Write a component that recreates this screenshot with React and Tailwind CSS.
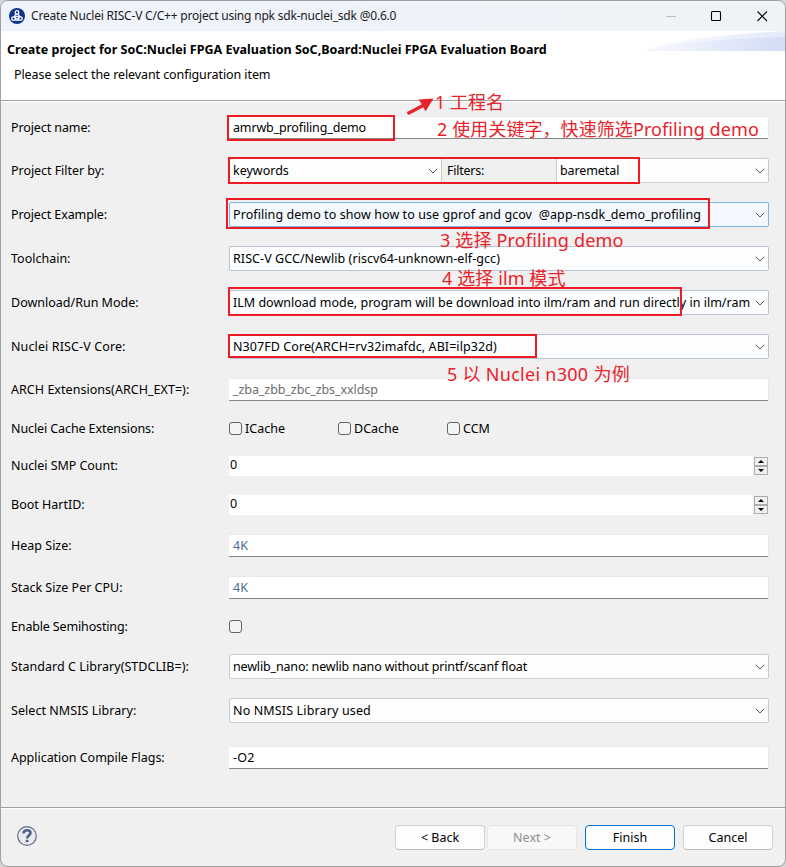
const chev = (
  <svg width="10" height="6" viewBox="0 0 10 6" fill="none" stroke="#5c5c5c" strokeWidth="1" className="shrink-0">
    <path d="M0.8 0.8 L5 5 L9.2 0.8" />
  </svg>
);

const UI = "font-['Noto_Sans','Noto_Sans_CJK_SC',sans-serif]";

function Txt({ className = "", children }) {
  return <span className={`whitespace-pre ${className}`}>{children}</span>;
}

function Row({ label, labelClass = "", className = "", children }) {
  return (
    <div className={`flex items-center ${className}`}>
      <div className={`w-[218px] shrink-0 leading-[13px] ${labelClass}`}>
        <Txt>{label}</Txt>
      </div>
      {children}
    </div>
  );
}

function Combo({ children, textClass = "", className = "w-[540px] border-[#b9c3d1] bg-[#fbfdfe]" }) {
  return (
    <div className={`flex h-[25px] shrink-0 items-center justify-between rounded-[2px] border pr-[3px] pl-[3px] ${className}`}>
      <Txt className={`pt-[2px] ${textClass}`}>{children}</Txt>
      {chev}
    </div>
  );
}

function Field({ children, textClass = "" }) {
  return (
    <div className="flex h-[22px] w-[539px] shrink-0 items-center border-b border-[#868686] bg-white pl-[4px] shadow-[1px_0_0_#e6e6e6,0_-1px_0_#e9e9e9]">
      <Txt className={`pt-[2px] ${textClass}`}>{children}</Txt>
    </div>
  );
}

function Check({ children, className = "" }) {
  return (
    <div className={`flex items-center gap-[3px] ${className}`}>
      <div className="size-[13px] shrink-0 rounded-[3px] border border-[#636363] bg-[#f4f4f4]" />
      <Txt className="pt-[2px]">{children}</Txt>
    </div>
  );
}

function Spinner() {
  return (
    <div className="flex h-[20px] w-[540px] shrink-0 items-center">
      <div className="flex h-full w-[524px] items-center bg-white pb-px pl-px">0</div>
      <div className="ml-[1px] flex h-[18px] w-[14px] flex-col">
        <div className="flex h-[9px] items-center justify-center border border-[#adadad] bg-[#f0f0f0]">
          <svg width="6" height="3" viewBox="0 0 6 3"><path d="M3 0 L6 3 H0Z" /></svg>
        </div>
        <div className="flex h-[9px] items-center justify-center border border-[#adadad] bg-[#f0f0f0]">
          <svg width="6" height="3" viewBox="0 0 6 3"><path d="M0 0 H6 L3 3Z" /></svg>
        </div>
      </div>
    </div>
  );
}

function Button({ children, className = "border-[#d0d0d0] border-b-[#bcbcbc] bg-[#fdfdfd]" }) {
  return (
    <button className={`flex h-[25px] w-[90px] items-center justify-center rounded-[4px] border pt-[2px] ${className}`}>
      <Txt>{children}</Txt>
    </button>
  );
}

function Mark({ className }) {
  return <div className={`absolute border-2 border-[#ed1c24] ${className}`} />;
}

function Note({ className, children }) {
  return (
    <div className={`absolute text-[18px] leading-[24px] whitespace-pre text-[#e8232b] ${className}`}>{children}</div>
  );
}

export default function App() {
  return (
    <div className={`relative h-[867px] w-[786px] bg-[#d3d5d8] text-[12.5px] text-black ${UI}`}>
      <div className="flex h-[867px] w-[786px] flex-col overflow-hidden rounded-[8px] border border-[#a0a0a0] bg-[#f0f0f0]">
        <header className="flex h-[30px] shrink-0 items-center bg-linear-to-r from-[#eff3fb] to-[#eef3f7] pl-[8px]">
          <svg width="16" height="16" viewBox="0 0 16 16">
            <circle cx="8" cy="8" r="8" fill="#12338c" />
            <g fill="none" stroke="#fff" strokeWidth="1.3">
              <circle cx="8" cy="4.4" r="1.8" />
              <circle cx="4.5" cy="10.6" r="1.8" />
              <circle cx="11.5" cy="10.6" r="1.8" />
              <circle cx="8" cy="9.6" r="1.5" />
              <path d="M7 6L5 9M9 6l2 3M6 12h4" />
            </g>
          </svg>
          <Txt className="ml-[6px] text-[12px] tracking-[-0.2px] text-[#1a1a1a]">Create Nuclei RISC-V C/C++ project using npk sdk-nuclei_sdk @0.6.0</Txt>
          <svg className="mr-[16px] ml-auto" width="104" height="12" viewBox="0 0 104 12" fill="none" stroke="#000" strokeWidth="1.1">
            <path d="M1 6.5h10" stroke="#b9bdc4" />
            <rect x="46.5" y="1.5" width="9" height="9" rx="1" />
            <path d="M92.5 1.5l9.5 9.5M102 1.5L92.5 11" />
          </svg>
        </header>
        <section className="relative flex h-[70px] shrink-0 flex-col border-b border-[#a0a0a0] bg-white pt-[9px] pl-[6px]">
          <svg className="absolute top-0 right-0" width="141" height="20" viewBox="0 0 141 20">
            <defs>
              <linearGradient id="swoosh" x1="0" x2="1">
                <stop offset="0" stopColor="#f8f9fd" />
                <stop offset="1" stopColor="#d3dcf6" />
              </linearGradient>
            </defs>
            <path d="M1 20Q25 7 141 0V20Z" fill="url(#swoosh)" opacity=".6" />
            <path d="M1 20Q40 9 141 6V20Z" fill="url(#swoosh)" />
          </svg>
          <Txt className="text-[12.5px] leading-[19px] font-bold tracking-[0.012px]">Create project for SoC:Nuclei FPGA Evaluation SoC,Board:Nuclei FPGA Evaluation Board</Txt>
          <Txt className="mt-[6px] ml-[7px] leading-[19px] tracking-[-0.09px]">Please select the relevant configuration item</Txt>
        </section>
        <main className="h-[706px] shrink-0 border-t border-white pl-[10px]">
          <Row className="mt-[15px] h-[22px]" labelClass="pb-[2px] tracking-[-0.1px]" label="Project name:">
            <Field textClass="tracking-[-0.15px]">amrwb_profiling_demo</Field>
          </Row>
          <Row className="mt-[19px] h-[25px]" labelClass="tracking-[-0.05px]" label="Project Filter by:">
            <Combo className="w-[213px] border-[#cccccc] bg-[#fdfdfd]">keywords</Combo>
            <Txt className="w-[114px] pt-[2px] pl-[5px] tracking-[-0.25px]">Filters:</Txt>
            <Combo className="w-[213px] border-[#cccccc] bg-[#fdfdfd]" textClass="tracking-[-0.1px]">baremetal</Combo>
          </Row>
          <Row className="mt-[19px] h-[25px]" labelClass="tracking-[-0.1px]" label="Project Example:">
            <Combo className="w-[540px] border-[#7eb4dd] bg-[#f2f8fd]" textClass="tracking-[0.08px]">Profiling demo to show how to use gprof and gcov  @app-nsdk_demo_profiling</Combo>
          </Row>
          <Row className="mt-[19px] h-[25px]" label="Toolchain:">
            <Combo textClass="tracking-[0.07px]">RISC-V GCC/Newlib (riscv64-unknown-elf-gcc)</Combo>
          </Row>
          <Row className="mt-[19px] h-[25px]" label="Download/Run Mode:">
            <Combo textClass="tracking-[0.01px]">ILM download mode, program will be download into ilm/ram and run directly in ilm/ram</Combo>
          </Row>
          <Row className="mt-[19px] h-[25px]" labelClass="tracking-[0.12px]" label="Nuclei RISC-V Core:">
            <Combo textClass="tracking-[0.075px]">N307FD Core(ARCH=rv32imafdc, ABI=ilp32d)</Combo>
          </Row>
          <Row className="mt-[20px] h-[22px]" labelClass="pb-[2px] tracking-[0.04px]" label="ARCH Extensions(ARCH_EXT=):">
            <Field textClass="tracking-[-0.07px] text-[#6d6d6d]">_zba_zbb_zbc_zbs_xxldsp</Field>
          </Row>
          <Row className="mt-[21px] h-[13px]" labelClass="tracking-[-0.1px]" label="Nuclei Cache Extensions:">
            <Check className="w-[109px]">ICache</Check>
            <Check className="w-[109px]">DCache</Check>
            <Check>CCM</Check>
          </Row>
          <Row className="mt-[21px] h-[20px]" labelClass="pb-[2px] tracking-[-0.05px]" label="Nuclei SMP Count:"><Spinner /></Row>
          <Row className="mt-[19px] h-[20px]" labelClass="pb-[2px]" label="Boot HartID:"><Spinner /></Row>
          <Row className="mt-[20px] h-[22px]" labelClass="pb-[2px]" label="Heap Size:"><Field textClass="text-[#4d6f92]">4K</Field></Row>
          <Row className="mt-[20px] h-[22px]" labelClass="pb-[2px]" label="Stack Size Per CPU:"><Field textClass="text-[#4d6f92]">4K</Field></Row>
          <Row className="mt-[21px] h-[13px]" labelClass="tracking-[-0.15px]" label="Enable Semihosting:"><Check /></Row>
          <Row className="mt-[21px] h-[25px]" labelClass="tracking-[0.05px]" label="Standard C Library(STDCLIB=):">
            <Combo className="w-[540px] border-[#cccccc] bg-[#fdfdfd]" textClass="tracking-[-0.16px]">newlib_nano: newlib nano without printf/scanf float</Combo>
          </Row>
          <Row className="mt-[19px] h-[25px]" labelClass="tracking-[0.05px]" label="Select NMSIS Library:">
            <Combo className="w-[540px] border-[#cccccc] bg-[#fdfdfd]" textClass="tracking-[0.14px]">No NMSIS Library used</Combo>
          </Row>
          <Row className="mt-[24px] h-[22px]" labelClass="pb-[2px] tracking-[-0.03px]" label="Application Compile Flags:">
            <Field textClass="tracking-[0.2px]">-O2</Field>
          </Row>
        </main>
        <footer className="flex grow items-start border-t border-[#a0a0a0] pr-[12px] pl-[16px] shadow-[inset_0_1px_0_#fff]">
          <svg className="mt-[18px]" width="20" height="20" viewBox="0 0 20 20" fill="none">
            <circle cx="10" cy="10" r="9.3" fill="#e9ebee" stroke="#5b6c8b" strokeWidth="1.2" />
            <path d="M6.5 7.6C6.5 5.3 8 4.3 10.1 4.3S13.5 5.4 13.5 7.1C13.5 9.4 10.1 9.4 10.1 12.6" stroke="#4d618a" strokeWidth="2.5" />
            <rect x="8.8" y="13.8" width="2.6" height="2.3" fill="#4d618a" />
          </svg>
          <div className="mt-[17px] ml-auto flex">
            <Button>{"< Back"}</Button>
            <Button className="ml-[2px] border-[#e6e6e6] bg-[#f8f8f8] text-[#8d8d8d]">{"Next >"}</Button>
            <Button className="ml-[8px] border-[#0073cf] bg-[#fdfdfd]">Finish</Button>
            <Button className="ml-[8px] border-[#d0d0d0] border-b-[#bcbcbc] bg-[#fdfdfd]">Cancel</Button>
          </div>
        </footer>
      </div>

      <Mark className="top-[115px] left-[227px] h-[26px] w-[168px]" />
      <Mark className="top-[157px] left-[228px] h-[27px] w-[412px]" />
      <Mark className="top-[198px] left-[226px] h-[31px] w-[484px]" />
      <Mark className="top-[287px] left-[228px] h-[29px] w-[454px]" />
      <Mark className="top-[334px] left-[228px] h-[24px] w-[309px]" />
      <svg className="absolute top-[96px] left-[405px]" width="30" height="20" viewBox="0 0 30 20">
        <path d="M3.8 17L20 8.5" stroke="#e8232b" strokeWidth="3.4" strokeLinecap="round" />
        <path d="M28.5 2.5L13.5 3.5L17 8.5L20.5 15.5Z" fill="#e8232b" />
      </svg>
      <Note className="top-[90px] left-[435px]">1 工程名</Note>
      <Note className="top-[117px] left-[437px] tracking-[0.08px]">2 使用关键字，快速筛选Profiling demo</Note>
      <Note className="top-[228px] left-[440px] tracking-[0.16px]">3 选择 Profiling demo</Note>
      <Note className="top-[266px] left-[442px] tracking-[0.1px]">4 选择 ilm 模式</Note>
      <Note className="top-[362px] left-[447px] tracking-[0.28px]">5 以 Nuclei n300 为例</Note>
    </div>
  );
}
